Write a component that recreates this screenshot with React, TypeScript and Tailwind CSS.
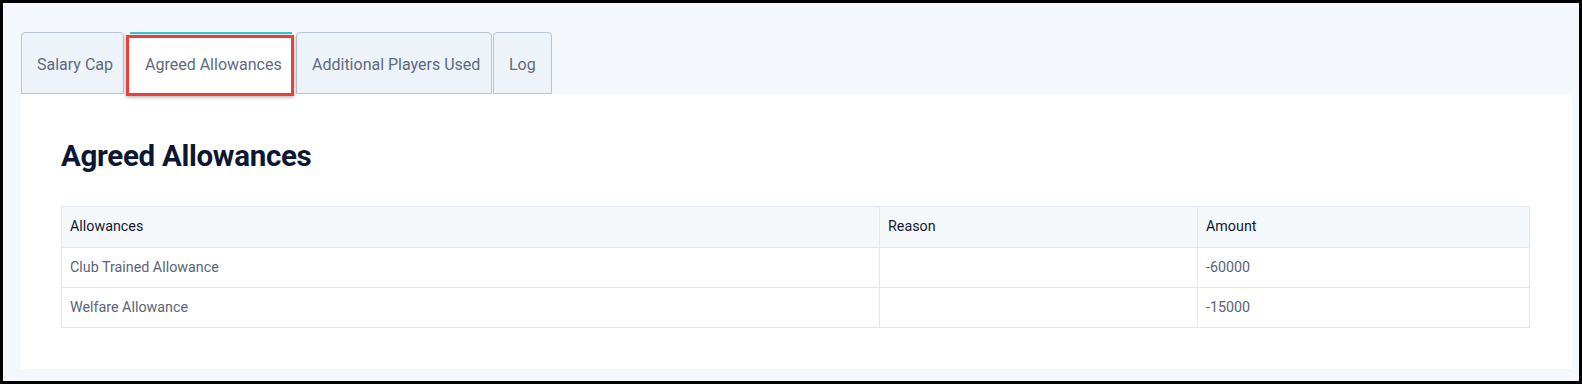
import React from "react";

const tabs = [
  { label: "Salary Cap", w: "w-[103px]", active: false },
  { label: "Agreed Allowances", w: "w-[170px]", active: true },
  { label: "Additional Players Used", w: "w-[196px]", active: false },
  { label: "Log", w: "w-[59px]", active: false },
];

const rows = [
  { name: "Club Trained Allowance", reason: "", amount: "-60000" },
  { name: "Welfare Allowance", reason: "", amount: "-15000" },
];

export default function App() {
  return (
    <div className="w-[1582px] h-[384px] bg-black p-[3px]" style={{ fontFamily: "Roboto, 'Noto Sans', sans-serif" }}>
      <div className="h-full w-full bg-[#f4f7fb] pt-[29px] pl-[18px] pr-[7px] pb-[12px] flex flex-col">
        <div className="flex h-[62px] items-stretch">
          <div className="flex items-stretch">
            {tabs.map((t) =>
              t.active ? (
                <div
                  key={t.label}
                  className={`relative ${t.w} bg-white flex items-center pl-5 pt-[3px] text-[16px] whitespace-nowrap text-[#5d6a80] mr-[1px]`}
                >
                  <div className="absolute left-[5px] right-[3px] top-0 h-[2px] bg-[#3cc8d2]" />
                  <span>{t.label}</span>
                  <div className="absolute left-[1px] right-[1px] top-[3px] bottom-[-2px] border-[3px] border-[#ec3f3b] shadow-[0_1px_4px_rgba(0,0,0,0.35)] pointer-events-none" />
                </div>
              ) : (
                <div
                  key={t.label}
                  className={`${t.w} bg-[#eef3f9] border border-[#b9c5d4] rounded-t-[4px] flex items-center pl-[15px] pt-[3px] text-[16px] whitespace-nowrap text-[#5d6a80] mr-[1px]`}
                >
                  <span>{t.label}</span>
                </div>
              )
            )}
          </div>
        </div>
        <div className="flex-1 bg-white pt-[43px] px-[40px]">
          <h1 className="text-[29.5px] leading-[38px] font-bold text-[#0d1733] tracking-[-0.3px]">Agreed Allowances</h1>
          <table className="mt-[31px] w-[1469px] border-collapse text-[14.3px]">
            <colgroup>
              <col className="w-[818px]" />
              <col className="w-[318px]" />
              <col />
            </colgroup>
            <thead>
              <tr className="h-[41px] bg-[#f5f8fb]">
                <th className="border border-[#e1e7ee] px-2 text-left font-normal text-[#0f1830]">Allowances</th>
                <th className="border border-[#e1e7ee] px-2 text-left font-normal text-[#0f1830]">Reason</th>
                <th className="border border-[#e1e7ee] px-2 text-left font-normal text-[#0f1830]">Amount</th>
              </tr>
            </thead>
            <tbody>
              {rows.map((r) => (
                <tr key={r.name} className="h-[40px]">
                  <td className="border border-[#e1e7ee] px-2 text-[#5a6478]">{r.name}</td>
                  <td className="border border-[#e1e7ee] px-2 text-[#5a6478]">{r.reason}</td>
                  <td className="border border-[#e1e7ee] px-2 text-[#5a6478]">{r.amount}</td>
                </tr>
              ))}
            </tbody>
          </table>
        </div>
      </div>
    </div>
  );
}
